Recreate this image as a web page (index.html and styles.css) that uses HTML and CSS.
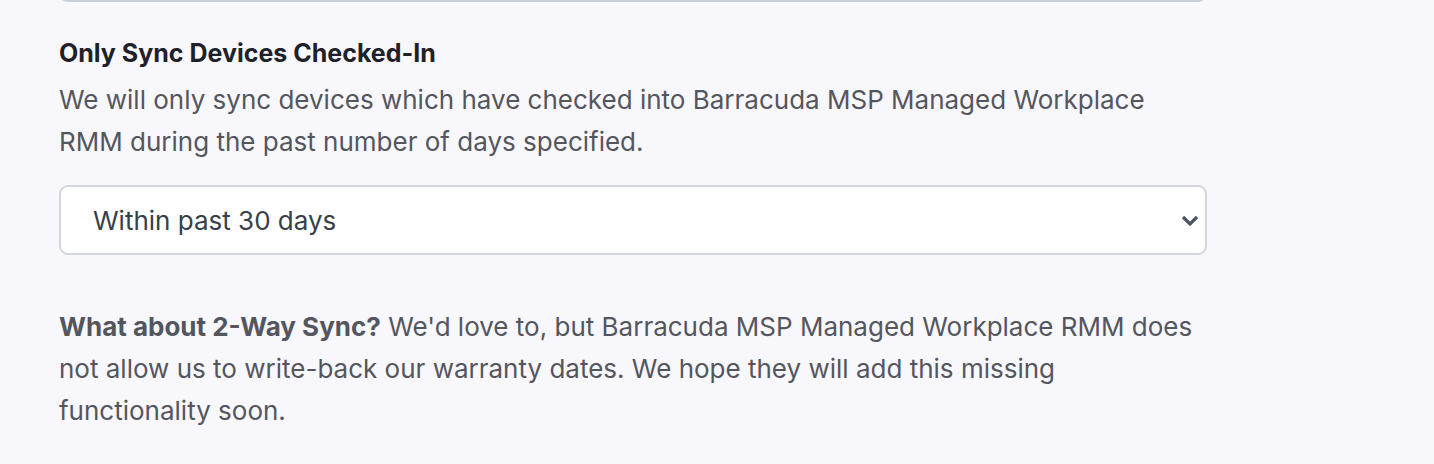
FILE: index.html
```html
<!DOCTYPE html>
<html lang="en">

<head>
  <meta charset="UTF-8" />
  <meta name="viewport" content="width=device-width, initial-scale=1.0" />
  <title>Sync Settings</title>
  <link rel="stylesheet" href="styles.css">
</head>

<body>
  <div class="settings">
    <div class="prev-field"></div>

    <div class="field">
      <h3 class="field-title">Only Sync Devices Checked-In</h3>
      <p class="field-desc">
        We will only sync devices which have checked into Barracuda MSP Managed Workplace
        RMM during the past number of days specified.
      </p>
      <div class="select-wrap">
        <select class="select">
          <option>Within past 30 days</option>
        </select>
        <svg class="select-arrow" width="20" height="14" viewBox="0 0 20 14">
          <path d="M3 4 L10 11 L17 4" fill="none" stroke="#4b5563" stroke-width="3.2" />
        </svg>
      </div>
    </div>

    <p class="note">
      <strong>What about 2-Way Sync?</strong> We'd love to, but Barracuda MSP Managed Workplace RMM does
      not allow us to write-back our warranty dates. We hope they will add this missing
      functionality soon.
    </p>
  </div>
</body>

</html>
```

FILE: styles.css
```css
* {
  margin: 0;
  padding: 0;
  box-sizing: border-box;
}

html,
body {
  width: 100%;
  height: 100%;
}

body {
  background: #f8f7fc;
  font-family: Inter, Roboto, "Liberation Sans", sans-serif;
  overflow: hidden;
}

.settings {
  width: 1148px;
  margin-left: 59px;
}

/* bottom edge of the field above, scrolled mostly out of view */
.prev-field {
  height: 60px;
  margin-top: -58px;
  border: 2px solid #cbd0d8;
  border-radius: 9px;
  background: #fff;
}

.field {
  padding-top: 36px;
}

.field-title {
  font-size: 25px;
  line-height: 30px;
  font-weight: 700;
  color: #1f2129;
}

.field-desc {
  max-width: 1140px;
  margin-top: 11px;
  font-size: 26px;
  line-height: 42px;
  color: #54565e;
}

.select-wrap {
  position: relative;
  margin-top: 22px;
}

.select {
  display: block;
  width: 100%;
  height: 70px;
  padding: 0 60px 0 32px;
  font-family: inherit;
  font-size: 26px;
  color: #374049;
  background: #fff;
  border: 2px solid #d3d6dc;
  border-radius: 9px;
  appearance: none;
  -webkit-appearance: none;
  outline: none;
}

.select-arrow {
  position: absolute;
  right: 7px;
  top: 28px;
  pointer-events: none;
}

.note {
  max-width: 1140px;
  margin-top: 51px;
  font-size: 26px;
  line-height: 42px;
  color: #54565e;
}

.note strong {
  font-weight: 700;
}
```
